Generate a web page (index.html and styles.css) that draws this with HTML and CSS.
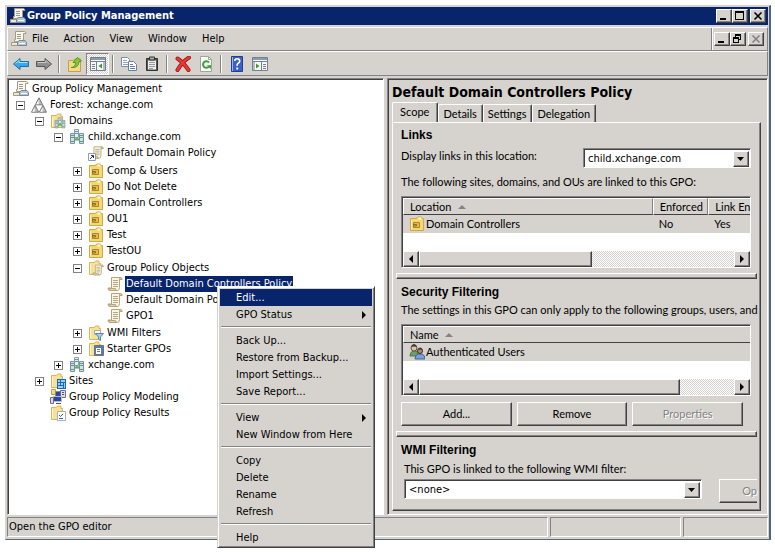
FILE: index.html
```html
<!DOCTYPE html>
<html lang="en">
<head>
  <meta charset="UTF-8">
  <meta name="viewport" content="width=device-width, initial-scale=1.0">
  <title>Group Policy Management</title>
  <link rel="stylesheet" href="styles.css">
</head>
<body>
  <svg class="sprite" aria-hidden="true">
    <symbol id="i-scroll" viewBox="0 0 16 16">
      <path d="M4.500 1.500h9q1.500.5 1.500 2h-2.500v8q0 3-2 3h-8q-1.500-.5-1.500-2.500h3.500z" fill="#fbf5e0" stroke="#b5a57c"/>
      <path d="M12.500 3.500q0-2 1.200-2t1.300 2zM1.500 12.500h7q0 2 1.500 2H3q-1.500 0-1.500-2z" fill="#e3d6ae" stroke="#b5a57c"/>
      <path d="M6 4.500h5M6 6.500h5M6 8.500h5M6 10.500h5" stroke="#b0a78a"/>
    </symbol>
    <symbol id="i-gpm" viewBox="0 0 16 16">
      <path d="M4.500.5h9q1.500.5 1.500 2h-2.500v8h-9v-2h1z" fill="#fbf7ea" stroke="#a39b82"/>
      <path d="M6 3.500h4M6 5.500h4M6 7.500h4" stroke="#999"/>
      <path d="M.5 11.500h6v3h-6z" fill="#efe8d0" stroke="#a39b82"/>
      <path d="M6.500 11.500l1.500-2h6l1.500 2v3h-9z" fill="#b9c6d3" stroke="#76879a"/>
      <path d="M8 12.500h6" stroke="#fff"/>
    </symbol>
    <symbol id="i-forest" viewBox="0 0 16 16">
      <path d="M8 .8l3.700 7H4.300zM4 8.200l3.700 7H.5zM12 8.200l3.500 7H8.300z" fill="#bdbdbd" stroke="#777"/>
      <path d="M7.600 3v4.300H5.300zM3.600 10.500v4.200H1.300zM11.600 10.500v4.200H9.200z" fill="#fff"/>
    </symbol>
    <symbol id="i-folder" viewBox="0 0 16 16">
      <path d="M1.500 14.500v-12h5l1-1.500h3.500v2.500h1.500v11z" fill="#f8e196" stroke="#d6b65e"/>
      <path d="M2.500 4v9.500" stroke="#fff6d0"/>
    </symbol>
    <symbol id="i-ou" viewBox="0 0 16 16">
      <path d="M1.500 14.500v-12h6l1-1.500h4v1.500h2v12z" fill="#f7d870" stroke="#cfa84a"/>
      <path d="M9.500 1.500h3v2h-3z" fill="#fff8d8"/>
      <path d="M4.500 6.500h6v5h-6z" fill="#e4bb48" stroke="#a98730"/>
      <path d="M4 8.500h3.500v1.500H4" fill="none" stroke="#8a6c24"/>
      <path d="M2.500 4v9.500" stroke="#fdeeb0"/>
    </symbol>
    <symbol id="i-domain" viewBox="0 0 16 16">
      <path d="M5.500.5h4v8h-4z" fill="#e6f0ee" stroke="#86a3a4"/>
      <path d="M1.500 4.500h4v10h-4z" fill="#cfe0ea" stroke="#7893a8"/>
      <path d="M10.500 4.500h4v10h-4z" fill="#cfe0ea" stroke="#7893a8"/>
      <path d="M6 2.500h3M6 4.500h3M2 6.500h3M2 8.500h3M11 6.500h3M11 8.500h3" stroke="#6a9884"/>
      <path d="M5.500 11l2.500-2.500 2.500 2.500z" fill="#7cc07a" stroke="#58a05e"/>
      <path d="M2 12.500h3M11 12.500h3" stroke="#58a858"/>
    </symbol>
    <symbol id="i-domains" viewBox="0 0 16 16">
      <use href="#i-folder"/>
      <use href="#i-domain" x="4" y="4" width="12" height="12"/>
    </symbol>
    <symbol id="i-link" viewBox="0 0 16 16">
      <use href="#i-scroll" x="2" width="14" height="15"/>
      <path d="M.5 8.500h7v7h-7z" fill="#fff" stroke="#9a9a9a"/>
      <path d="M2 14l3-3M3 10.500h2.500V13" fill="none" stroke="#123a8c"/>
    </symbol>
    <symbol id="i-gpos" viewBox="0 0 16 16">
      <use href="#i-folder"/>
      <use href="#i-scroll" x="4" y="4" width="12" height="12"/>
    </symbol>
    <symbol id="i-wmi" viewBox="0 0 16 16">
      <use href="#i-folder"/>
      <path d="M6.500 5.500h6v4h-6z" fill="#fff" stroke="#aaa"/>
      <path d="M7.500 8.500h8l-3 3.500v3.500l-2-1v-2.500z" fill="#a9cbe5" stroke="#5d88aa"/>
    </symbol>
    <symbol id="i-starter" viewBox="0 0 16 16">
      <use href="#i-folder"/>
      <path d="M6.500 4.500h9v10h-9z" fill="#4c7fc0" stroke="#7a7068"/>
      <path d="M8 7h5v6H8z" fill="#fff"/>
      <path d="M9 8.500h3M9 10.500h3" stroke="#777"/>
    </symbol>
    <symbol id="i-sites" viewBox="0 0 16 16">
      <use href="#i-folder"/>
      <path d="M7 6h9v10H7z" fill="#1768b5"/>
      <path d="M8 7h2v2H8zM11 7h4v2h-4zM8 10h2v2H8zM11 10h2v2h-2zM14 10h1v5h-1zM8 13h5v2H8z" fill="#9ad0f5"/>
    </symbol>
    <symbol id="i-modeling" viewBox="0 0 16 16">
      <path d="M1.500.5h4v5h-4z" fill="#f5d878" stroke="#c9a13c"/>
      <path d="M5.500 2.500h7v5h-7z" fill="#2a47a8" stroke="#888"/>
      <path d="M10.500 1.500h5v7h-5z" fill="#dcdcea" stroke="#6d6d8a"/>
      <path d="M3.500 7.500h8v5h-8z" fill="#2a47a8" stroke="#b9b9c4"/>
      <path d="M.5 8.500h3v6h-3z" fill="#d9d9e4" stroke="#6d6d8a"/>
      <path d="M6 14.500h5M12 3.500h2M12 5.500h2" stroke="#555"/>
    </symbol>
    <symbol id="i-results" viewBox="0 0 16 16">
      <use href="#i-folder"/>
      <path d="M7.500 6.500h8v9h-8z" fill="#fff" stroke="#a3b0c0"/>
      <path d="M9 10l1.500 1.500L13 9M9 13.500h4" fill="none" stroke="#2a62b0"/>
    </symbol>
    <symbol id="i-users" viewBox="0 0 16 16">
      <path d="M1 12q0-4 3-5h3q2 1 2 5z" fill="#6f9c71" stroke="#4f744f"/>
      <circle cx="5" cy="4" r="3" fill="#e2c39c" stroke="#5c5648"/>
      <path d="M6 15q0-4 3-5h4q3 1 3 5z" fill="#7b9fd6" stroke="#46649a"/>
      <circle cx="11" cy="7" r="2.500" fill="#b88a64" stroke="#33302c"/>
      <path d="M2 3q1-3 3-3t3 3q-3-1-6 0zM8.500 6q1-3 3-2.500T13.500 6q-3-1-5 0z" fill="#3e3a36"/>
    </symbol>
    <symbol id="i-back" viewBox="0 0 16 16">
      <path d="M.5 8L7 2.500v3h8.500v5H7v3z" fill="#37a9ee" stroke="#1d6dab"/>
      <path d="M2.500 7.500L6 4.500v2h8.500" fill="none" stroke="#a5e0ff"/>
    </symbol>
    <symbol id="i-forward" viewBox="0 0 16 16">
      <path d="M15.500 8L9 2.500v3H.5v5H9v3z" fill="#8f8f8f" stroke="#555"/>
      <path d="M1.500 6.500H10v-2l3 3" fill="none" stroke="#ccc"/>
    </symbol>
    <symbol id="i-up" viewBox="0 0 16 16">
      <path d="M1.500 15.500v-11h5l1-1.500h6v12.500z" fill="#f5da86" stroke="#c3a04a"/>
      <path d="M4 11.500q4.500 0 4.500-5H6L10.500 1.500l4 3.500-2.500.5q-.5 7-8 6z" fill="#7fc83a" stroke="#4f9a22"/>
    </symbol>
    <symbol id="i-panel" viewBox="0 0 16 16">
      <path d="M.5 1.500h15v13H.5z" fill="#f8f8f8" stroke="#73808f"/>
      <path d="M1 2h14v2H1z" fill="#8a9bb0"/>
      <path d="M1 5.500h14M6.500 6v8M2 8.500h3M2 10.500h3M2 12.500h3M14 6v8" stroke="#73808f"/>
      <path d="M12 7.500v5l-3.500-2.500z" fill="#3a9b34"/>
    </symbol>
    <symbol id="i-actions" viewBox="0 0 16 16">
      <path d="M.5 1.500h15v13H.5z" fill="#f8f8f8" stroke="#73808f"/>
      <path d="M1 2h14v2H1z" fill="#8a9bb0"/>
      <path d="M1 5.500h14M9.500 6v8M11 8.500h3M11 10.500h3M11 12.500h3M2 6v8" stroke="#73808f"/>
      <path d="M4 7.500v5L7.500 10z" fill="#3a9b34"/>
    </symbol>
    <symbol id="i-copy" viewBox="0 0 16 16">
      <path d="M.5 1.500h6l2 2v7h-8z" fill="#fff" stroke="#7b8ea8"/>
      <path d="M2 4.500h4M2 6.500h5M2 8.500h5" stroke="#8aa5cf"/>
      <path d="M7.500 5.500h5l3 3v6h-8z" fill="#fff" stroke="#6d7f98"/>
      <path d="M9 8.500h3M9 10.500h5M9 12.500h5" stroke="#5c83c0"/>
    </symbol>
    <symbol id="i-paste" viewBox="0 0 16 16">
      <path d="M2.500 2.500h11v12h-11z" fill="#555" stroke="#333"/>
      <path d="M4 4.500h8v9H4z" fill="#eee"/>
      <path d="M5.500 1h5v3h-5z" fill="#aaa" stroke="#333"/>
      <path d="M5 6.500h6M5 8.500h6M5 10.500h6M5 12.500h4" stroke="#999"/>
    </symbol>
    <symbol id="i-delete" viewBox="0 0 16 16">
      <path d="M2.500 2.500Q8 6 13.500 14M14 1.500Q7 6 2.500 14" fill="none" stroke="#a51212" stroke-width="4" stroke-linecap="round"/>
      <path d="M2.500 2.500Q8 6 13.500 14M14 1.500Q7 6 2.500 14" fill="none" stroke="#e33a35" stroke-width="2.500" stroke-linecap="round"/>
    </symbol>
    <symbol id="i-refresh" viewBox="0 0 16 16">
      <path d="M2.500.5h8l3 3v12h-11z" fill="#fafafa" stroke="#a3a58f"/>
      <path d="M10.500.5v3h3" fill="none" stroke="#a3a58f"/>
      <path d="M11 10.500A3.300 3.300 0 1 1 11 6.500" fill="none" stroke="#3da13b" stroke-width="2"/>
      <path d="M8.500 9.500l4.500-.5v4z" fill="#3da13b"/>
    </symbol>
    <symbol id="i-help" viewBox="0 0 16 16">
      <path d="M2.500.5h11v15h-11z" fill="#3b5fc4" stroke="#233f94"/>
      <path d="M3.500 1v14" stroke="#9eb4f0"/>
      <path d="M5.700 5q0-2.300 2.500-2.300T10.700 5q0 1.500-1.500 2.300T8.200 10" fill="none" stroke="#fff" stroke-width="1.600"/>
      <path d="M7.300 11.500h1.900v2H7.300z" fill="#fff"/>
    </symbol>
    <symbol id="i-min" viewBox="0 0 12 10"><path d="M2 7h6v2H2z"/></symbol>
    <symbol id="i-max" viewBox="0 0 12 10"><path d="M1 0h9v9H1zM2 2v6h7V2z" fill-rule="evenodd"/></symbol>
    <symbol id="i-restore" viewBox="0 0 12 10">
      <path d="M3 0h6v6H7V5h1V2H4v1H3zM1 3h6v6H1zM2 5v3h4V5z" fill-rule="evenodd"/>
    </symbol>
    <symbol id="i-close" viewBox="0 0 12 10"><path d="M2.500 1.500l7 7M9.500 1.500l-7 7" fill="none" stroke="currentColor" stroke-width="1.600"/></symbol>
    <symbol id="i-down" viewBox="0 0 8 8"><path d="M0 2h7L3.500 6z"/></symbol>
    <symbol id="i-left" viewBox="0 0 8 8"><path d="M6 0v8L2 4z"/></symbol>
    <symbol id="i-right" viewBox="0 0 8 8"><path d="M2 0v8l4-4z"/></symbol>
    <symbol id="i-sort" viewBox="0 0 8 8"><path d="M0 6h8L4 2z"/></symbol>
  </svg>

  <div class="window">
    <header class="titlebar">
      <svg class="icon"><use href="#i-gpm"/></svg>
      <h1>Group Policy Management</h1>
      <div class="window-buttons">
        <button class="box-btn" aria-label="Minimize"><svg><use href="#i-min"/></svg></button>
        <button class="box-btn" aria-label="Maximize"><svg><use href="#i-max"/></svg></button>
        <button class="box-btn last" aria-label="Close"><svg><use href="#i-close"/></svg></button>
      </div>
    </header>

    <nav class="menubar">
      <svg class="icon"><use href="#i-gpm"/></svg>
      <button>File</button>
      <button>Action</button>
      <button>View</button>
      <button>Window</button>
      <button>Help</button>
      <div class="window-buttons child">
        <button class="box-btn" aria-label="Minimize view"><svg><use href="#i-min"/></svg></button>
        <button class="box-btn" aria-label="Restore view"><svg><use href="#i-restore"/></svg></button>
        <button class="box-btn last" aria-label="Close view" disabled><svg><use href="#i-close"/></svg></button>
      </div>
    </nav>

    <div class="toolbar">
      <button aria-label="Back"><svg class="icon"><use href="#i-back"/></svg></button>
      <button aria-label="Forward"><svg class="icon"><use href="#i-forward"/></svg></button>
      <span class="divider"></span>
      <button aria-label="Up one level"><svg class="icon"><use href="#i-up"/></svg></button>
      <button class="pressed" aria-label="Show console tree" aria-pressed="true"><svg class="icon"><use href="#i-panel"/></svg></button>
      <span class="divider"></span>
      <button aria-label="Copy"><svg class="icon"><use href="#i-copy"/></svg></button>
      <button aria-label="Paste"><svg class="icon"><use href="#i-paste"/></svg></button>
      <span class="divider"></span>
      <button aria-label="Delete"><svg class="icon"><use href="#i-delete"/></svg></button>
      <button aria-label="Refresh"><svg class="icon"><use href="#i-refresh"/></svg></button>
      <span class="divider"></span>
      <button aria-label="Help"><svg class="icon"><use href="#i-help"/></svg></button>
      <button aria-label="Show action pane"><svg class="icon"><use href="#i-actions"/></svg></button>
    </div>

    <main class="panes">
      <div class="tree">
        <div class="node root"><svg class="icon"><use href="#i-gpm"/></svg><span>Group Policy Management</span></div>
        <ul class="first">
          <li>
            <div class="node"><button class="toggle" aria-label="Collapse Forest"></button><svg class="icon"><use href="#i-forest"/></svg><span>Forest: xchange.com</span></div>
            <ul>
              <li>
                <div class="node"><button class="toggle" aria-label="Collapse Domains"></button><svg class="icon"><use href="#i-domains"/></svg><span>Domains</span></div>
                <ul>
                  <li>
                    <div class="node"><button class="toggle" aria-label="Collapse child.xchange.com"></button><svg class="icon"><use href="#i-domain"/></svg><span>child.xchange.com</span></div>
                    <ul>
                      <li class="linked"><div class="node leaf"><svg class="icon"><use href="#i-link"/></svg><span>Default Domain Policy</span></div></li>
                      <li><div class="node"><button class="toggle plus" aria-label="Expand Comp &amp; Users"></button><svg class="icon"><use href="#i-ou"/></svg><span>Comp &amp; Users</span></div></li>
                      <li><div class="node"><button class="toggle plus" aria-label="Expand Do Not Delete"></button><svg class="icon"><use href="#i-ou"/></svg><span>Do Not Delete</span></div></li>
                      <li><div class="node"><button class="toggle plus" aria-label="Expand Domain Controllers"></button><svg class="icon"><use href="#i-ou"/></svg><span>Domain Controllers</span></div></li>
                      <li><div class="node"><button class="toggle plus" aria-label="Expand OU1"></button><svg class="icon"><use href="#i-ou"/></svg><span>OU1</span></div></li>
                      <li><div class="node"><button class="toggle plus" aria-label="Expand Test"></button><svg class="icon"><use href="#i-ou"/></svg><span>Test</span></div></li>
                      <li><div class="node"><button class="toggle plus" aria-label="Expand TestOU"></button><svg class="icon"><use href="#i-ou"/></svg><span>TestOU</span></div></li>
                      <li class="objects">
                        <div class="node"><button class="toggle" aria-label="Collapse Group Policy Objects"></button><svg class="icon"><use href="#i-gpos"/></svg><span>Group Policy Objects</span></div>
                        <ul>
                          <li><div class="node leaf"><svg class="icon"><use href="#i-scroll"/></svg><span class="selected">Default Domain Controllers Policy</span></div></li>
                          <li><div class="node leaf"><svg class="icon"><use href="#i-scroll"/></svg><span>Default Domain Policy</span></div></li>
                          <li><div class="node leaf"><svg class="icon"><use href="#i-scroll"/></svg><span>GPO1</span></div></li>
                        </ul>
                      </li>
                      <li><div class="node"><button class="toggle plus" aria-label="Expand WMI Filters"></button><svg class="icon"><use href="#i-wmi"/></svg><span>WMI Filters</span></div></li>
                      <li><div class="node"><button class="toggle plus" aria-label="Expand Starter GPOs"></button><svg class="icon"><use href="#i-starter"/></svg><span>Starter GPOs</span></div></li>
                    </ul>
                  </li>
                  <li><div class="node"><button class="toggle plus" aria-label="Expand xchange.com"></button><svg class="icon"><use href="#i-domain"/></svg><span>xchange.com</span></div></li>
                </ul>
              </li>
              <li><div class="node"><button class="toggle plus" aria-label="Expand Sites"></button><svg class="icon"><use href="#i-sites"/></svg><span>Sites</span></div></li>
              <li><div class="node leaf"><svg class="icon"><use href="#i-modeling"/></svg><span>Group Policy Modeling</span></div></li>
              <li><div class="node leaf"><svg class="icon"><use href="#i-results"/></svg><span>Group Policy Results</span></div></li>
            </ul>
          </li>
        </ul>
      </div>

      <div class="details">
        <h2>Default Domain Controllers Policy</h2>
        <div class="tabs" role="tablist">
          <button class="tab active" role="tab" aria-selected="true">Scope</button>
          <button class="tab" role="tab">Details</button>
          <button class="tab" role="tab">Settings</button>
          <button class="tab" role="tab">Delegation</button>
        </div>
        <div class="sheet" role="tabpanel">
          <section>
            <h3>Links</h3>
            <div class="field">
              <label for="location">Display links in this location:</label>
              <div class="combo location">
                <select id="location"><option>child.xchange.com</option></select>
                <span class="box-btn arrow"><svg><use href="#i-down"/></svg></span>
              </div>
            </div>
            <p>The following sites, domains, and OUs are linked to this GPO:</p>
            <div class="list">
              <table>
                <thead>
                  <tr><th class="wide">Location <svg class="sort"><use href="#i-sort"/></svg></th><th class="mid">Enforced</th><th class="end">Link En</th></tr>
                </thead>
                <tbody>
                  <tr><td><div class="entry"><svg class="icon"><use href="#i-ou"/></svg>Domain Controllers</div></td><td>No</td><td>Yes</td></tr>
                </tbody>
              </table>
              <div class="scrollbar">
                <button class="box-btn" aria-label="Scroll links left"><svg><use href="#i-left"/></svg></button>
                <div class="track"><div class="thumb half"></div></div>
                <button class="box-btn" aria-label="Scroll links right"><svg><use href="#i-right"/></svg></button>
              </div>
            </div>
          </section>
          <hr class="splitter">

          <section>
            <h3>Security Filtering</h3>
            <p>The settings in this GPO can only apply to the following groups, users, and</p>
            <div class="list">
              <table>
                <thead>
                  <tr><th class="end">Name <svg class="sort"><use href="#i-sort"/></svg></th></tr>
                </thead>
                <tbody>
                  <tr><td><div class="entry"><svg class="icon"><use href="#i-users"/></svg>Authenticated Users</div></td></tr>
                </tbody>
              </table>
              <div class="scrollbar">
                <button class="box-btn" aria-label="Scroll names left"><svg><use href="#i-left"/></svg></button>
                <div class="track"><div class="thumb most"></div></div>
                <button class="box-btn" aria-label="Scroll names right"><svg><use href="#i-right"/></svg></button>
              </div>
            </div>
            <div class="actions">
              <button class="push">Add...</button>
              <button class="push">Remove</button>
              <button class="push" disabled>Properties</button>
            </div>
          </section>
          <hr class="splitter">

          <section>
            <h3>WMI Filtering</h3>
            <div class="wmi">
              <label for="filter">This GPO is linked to the following WMI filter:</label>
              <div class="filter-row">
                <div class="combo">
                  <select id="filter"><option>&lt;none&gt;</option></select>
                  <span class="box-btn arrow"><svg><use href="#i-down"/></svg></span>
                </div>
                <button class="push cut" disabled>Op</button>
              </div>
            </div>
          </section>
        </div>
      </div>
    </main>

    <footer class="statusbar">
      <span class="status">Open the GPO editor</span>
      <span></span>
      <span></span>
    </footer>
  </div>

  <div class="context-menu" role="menu">
    <button class="current" role="menuitem">Edit...</button>
    <button role="menuitem">GPO Status <svg><use href="#i-right"/></svg></button>
    <hr>
    <button role="menuitem">Back Up...</button>
    <button role="menuitem">Restore from Backup...</button>
    <button role="menuitem">Import Settings...</button>
    <button role="menuitem">Save Report...</button>
    <hr>
    <button role="menuitem">View <svg><use href="#i-right"/></svg></button>
    <button role="menuitem">New Window from Here</button>
    <hr>
    <button role="menuitem">Copy</button>
    <button role="menuitem">Delete</button>
    <button role="menuitem">Rename</button>
    <button role="menuitem">Refresh</button>
    <hr>
    <button role="menuitem">Help</button>
  </div>
</body>
</html>
```
FILE: styles.css
```css
* {
  box-sizing: border-box;
}

body {
  margin: 0;
  padding: 5px 4px 12px 5px;
  min-height: 100vh;
  display: flex;
  background: #fff;
  color: #000;
  font: 11px/16px "DejaVu Sans Condensed", "Noto Sans", sans-serif;
}

button, select {
  font: inherit;
  color: inherit;
  margin: 0;
  padding: 0;
  border: none;
  background: none;
  border-radius: 0;
}

h1, h2, h3, p, ul {
  margin: 0;
  padding: 0;
}

ul {
  list-style: none;
}

.sprite {
  position: absolute;
  width: 0;
  height: 0;
}

.icon {
  width: 16px;
  height: 16px;
  flex: none;
}

.window {
  flex: 1;
  min-width: 0;
  display: flex;
  flex-direction: column;
  background: #d6d3ce;
  border: 1px solid #d6d3ce;
  border-right: 2px solid #4a6484;
  border-bottom: 1px solid #5a6878;
  padding: 1px 1px 2px 1px;
}

/* Title bar, menu bar, toolbar */
.titlebar {
  display: flex;
  align-items: center;
  height: 18px;
  padding: 0 2px 0 3px;
  background: #08246b;
  color: #fff;
}

.titlebar h1 {
  flex: 1;
  margin-left: 1px;
  font-size: 11px;
  line-height: 16px;
}

.window-buttons {
  display: flex;
}

.box-btn {
  display: flex;
  align-items: center;
  justify-content: center;
  flex: none;
  width: 16px;
  height: 14px;
  background: #d6d3ce;
  color: #000;
  border: 1px solid;
  border-color: #fff #424142 #424142 #fff;
  box-shadow: inset -1px -1px #848284;
}

.box-btn svg {
  width: 12px;
  height: 10px;
  fill: currentColor;
}

.box-btn.last {
  margin-left: 2px;
}

.box-btn:disabled {
  color: #848284;
}

.menubar {
  display: flex;
  align-items: center;
  gap: 15px;
  height: 24px;
  margin-top: 2px;
  padding-left: 3px;
  border: 1px solid #fff;
  border-bottom-color: #848284;
  border-right-color: #848284;
}

.menubar .icon {
  margin-right: -10px;
}

.menubar .child {
  align-self: stretch;
  align-items: center;
  margin-left: auto;
  padding: 0 3px 0 2px;
  border-left: 1px solid #848284;
  box-shadow: inset 1px 0 #fff;
}

.toolbar {
  display: flex;
  align-items: center;
  height: 25px;
  margin-bottom: 2px;
  padding-left: 1px;
  border: 1px solid #fff;
  border-bottom-color: #848284;
  border-right-color: #848284;
}

.toolbar button {
  display: flex;
  align-items: center;
  justify-content: center;
  width: 23px;
  height: 22px;
}

.toolbar .pressed {
  border: 1px solid;
  border-color: #848284 #fff #fff #848284;
  background: repeating-conic-gradient(#fff 0 25%, #d6d3ce 0 50%) 0 0 / 2px 2px;
}

.divider {
  width: 2px;
  height: 18px;
  margin: 0 3px;
  border-left: 1px solid #848284;
  border-right: 1px solid #fff;
}

/* Console tree */
.panes {
  flex: 1;
  display: grid;
  grid-template-columns: minmax(0, 98fr) minmax(0, 99fr);
  gap: 3px;
}

.tree {
  background: #fff;
  border: 1px solid;
  border-color: #848284 #fff #fff #848284;
  box-shadow: inset 1px 1px #424142;
  padding: 2px 0 0 2px;
  white-space: nowrap;
  overflow: hidden;
}

.tree ul {
  padding-left: 19px;
}

.tree .first {
  padding-left: 6px;
}

.tree .linked {
  margin-bottom: 2px;
}

.tree .objects {
  margin: 1px 0;
}

.node {
  display: flex;
  align-items: center;
  height: 16px;
}

.node span {
  padding: 0 1px;
  margin-left: 2px;
}

.node.root {
  padding-left: 3px;
}

.node.leaf {
  padding-left: 15px;
}

.node .selected {
  background: #08246b;
  color: #fff;
}

.toggle {
  width: 9px;
  height: 9px;
  margin-right: 6px;
  border: 1px solid #848284;
  background: linear-gradient(#000, #000) center / 5px 1px no-repeat;
}

.toggle.plus {
  background: linear-gradient(#000, #000) center / 5px 1px no-repeat, linear-gradient(#000, #000) center / 1px 5px no-repeat;
}

/* Details pane */
.details {
  display: flex;
  flex-direction: column;
  min-width: 0;
  padding: 4px 6px 3px 4px;
  border: 1px solid;
  border-color: #848284 #fff #fff #848284;
  box-shadow: inset 1px 1px #424142;
  font-family: Lato, "Liberation Sans", sans-serif;
  white-space: nowrap;
}

.details h2 {
  font: bold 14px/18px "DejaVu Sans Condensed", sans-serif;
}

.tabs {
  display: flex;
  align-items: flex-end;
  height: 20px;
  margin-top: 1px;
}

.tab {
  height: 18px;
  padding: 0 5px 0 4px;
  border: 1px solid;
  border-color: #fff #424142 transparent #fff;
  border-bottom: none;
  border-radius: 2px 2px 0 0;
  box-shadow: inset -1px 0 #848284;
}

.tab.active {
  height: 21px;
  padding: 0 8px 2px 7px;
  margin-bottom: -1px;
  background: #d6d3ce;
}

.sheet {
  flex: 1;
  padding-top: 3px;
  border: 1px solid;
  border-color: #fff #424142 #424142 #fff;
  box-shadow: inset -1px -1px #848284;
}

section {
  padding: 0 9px 0 8px;
}

.splitter {
  height: 6px;
  margin: 5px 3px 4px 3px;
  border: 1px solid;
  border-color: #fff #424142 #424142 #fff;
  box-shadow: inset -1px -1px #848284;
}

h3 {
  font: bold 12px/18px "Liberation Sans", Arial, sans-serif;
}

.field {
  display: flex;
  justify-content: space-between;
  height: 24px;
  padding-top: 4px;
}

.combo {
  display: flex;
  flex: 1;
  height: 20px;
  background: #fff;
  border: 1px solid;
  border-color: #848284 #fff #fff #848284;
  box-shadow: inset 1px 1px #424142;
  padding: 2px 1px 1px 2px;
  font-family: "DejaVu Sans Condensed", "Noto Sans", sans-serif;
}

.combo.location {
  flex: 0 0 48%;
}

.combo select {
  flex: 1;
  min-width: 0;
  appearance: none;
  padding: 0 2px;
}

.combo .arrow {
  height: 16px;
}

.box-btn.arrow svg, .scrollbar svg {
  width: 8px;
  height: 8px;
}

section p {
  line-height: 18px;
}

.field + p {
  margin-top: 5px;
}

.list {
  display: flex;
  flex-direction: column;
  height: 72px;
  margin-top: 5px;
  background: #fff;
  border: 1px solid;
  border-color: #848284 #fff #fff #848284;
  box-shadow: inset 1px 1px #424142;
  padding: 1px 0 0 1px;
}

.list table {
  width: 100%;
  table-layout: fixed;
  border-collapse: separate;
  border-spacing: 0;
}

.list th {
  height: 17px;
  padding: 0 0 0 6px;
  background: #d6d3ce;
  border: 1px solid;
  border-color: #fff #848284 #424142 #fff;
  font-weight: normal;
  text-align: left;
  line-height: 14px;
}

.list th.end {
  border-right: none;
}

.list td {
  padding: 0 6px;
  background: #d6d3ce;
  line-height: 18px;
}

.list .wide {
  width: 72%;
}

.list .mid {
  width: 16%;
}

.entry {
  display: flex;
  align-items: center;
  gap: 1px;
}

.sort {
  width: 8px;
  height: 8px;
  margin-left: 4px;
  fill: #848284;
}

.scrollbar {
  display: flex;
  margin-top: auto;
}

.scrollbar .box-btn {
  height: 16px;
}

.track {
  flex: 1;
  background: repeating-conic-gradient(#fff 0 25%, #d6d3ce 0 50%) 0 0 / 2px 2px;
}

.thumb {
  height: 16px;
  background: #d6d3ce;
  border: 1px solid;
  border-color: #fff #424142 #424142 #fff;
  box-shadow: inset -1px -1px #848284;
}

.thumb.half {
  width: 55%;
}

.thumb.most {
  width: 83%;
}

.actions {
  display: flex;
  gap: 5px;
  padding: 6px 8px 0 0;
}

.push {
  flex: 1;
  height: 24px;
  border: 1px solid;
  border-color: #fff #424142 #424142 #fff;
  box-shadow: inset -1px -1px #848284;
}

.push:disabled {
  color: #848284;
  text-shadow: 1px 1px #fff;
}

.wmi {
  padding-left: 3px;
}

.wmi label {
  display: block;
  line-height: 20px;
}

.filter-row {
  display: flex;
  gap: 17px;
  margin-right: -6px;
}

/* The button runs on past the edge of the pane */
.push.cut {
  flex: 0 0 38px;
  border-right: none;
  box-shadow: inset 0 -1px #848284;
  text-align: right;
}

/* Status bar */
.statusbar {
  display: grid;
  grid-template-columns: minmax(0, 540fr) minmax(0, 131fr) minmax(0, 85fr);
  gap: 2px;
  height: 20px;
  margin-top: 2px;
}

.statusbar span {
  padding: 0 1px;
  line-height: 18px;
  border: 1px solid;
  border-color: #848284 #fff #fff #848284;
}

/* Context menu */
.context-menu {
  position: absolute;
  top: 286px;
  left: 217px;
  width: 158px;
  padding: 2px 2px 1px 2px;
  background: #d6d3ce;
  border: 1px solid;
  border-color: #fff #424142 #424142 #d6d3ce;
  box-shadow: inset 1px 1px #fff, inset -1px -1px #848284;
}

.context-menu button {
  display: flex;
  align-items: center;
  justify-content: space-between;
  width: 100%;
  height: 17px;
  padding: 0 4px 0 16px;
}

.context-menu .current {
  background: #08246b;
  color: #fff;
}

.context-menu svg {
  width: 8px;
  height: 8px;
}

.context-menu hr {
  margin: 3px 1px 4px 1px;
  border: none;
  border-top: 1px solid #848284;
  border-bottom: 1px solid #fff;
}
```
